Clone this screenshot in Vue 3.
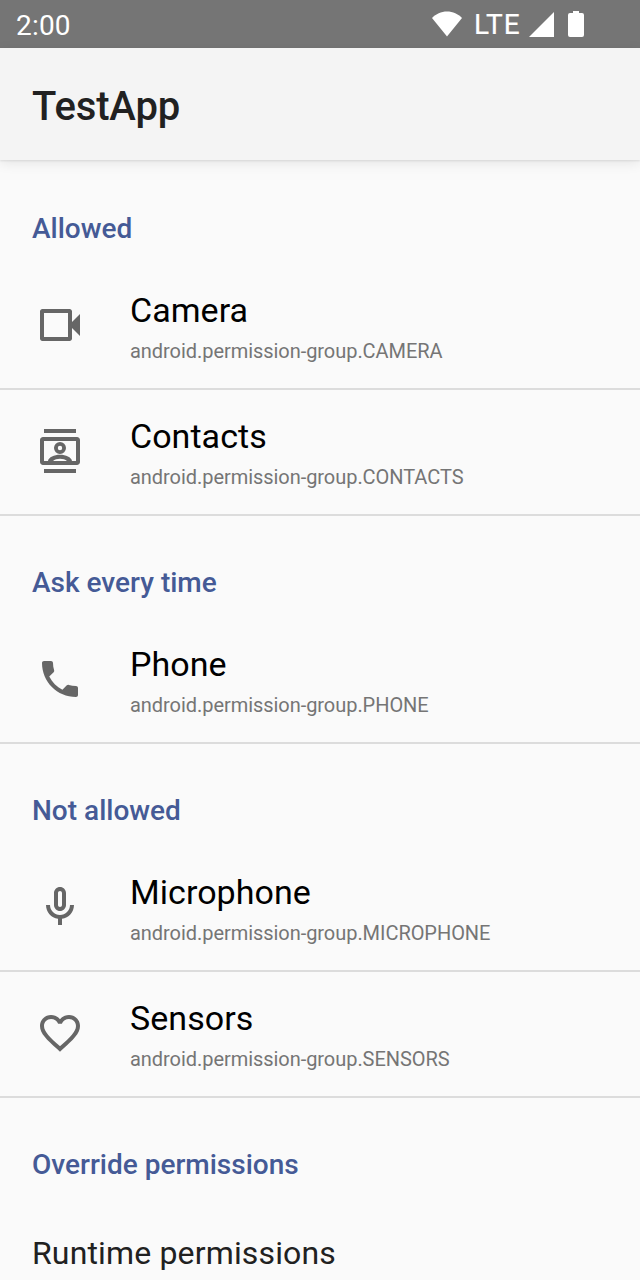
<script setup>
const sections = [
  { title: 'Allowed', items: [
    { name: 'Camera', id: 'CAMERA', icon: 'M3.200 4h13.600c.66 0 1.200.54 1.200 1.200v5.300l4-4v11l-4-4v5.300c0 .66-.54 1.200-1.200 1.200H3.200C2.540 20 2 19.460 2 18.800V5.200C2 4.540 2.540 4 3.200 4zM4 6v12h12V6z' },
    { name: 'Contacts', id: 'CONTACTS', icon: 'M4 1h16v2H4zM4 21h16v2H4zM3.500 5h17c.83 0 1.500.67 1.500 1.500v11c0 .83-.67 1.500-1.500 1.500h-17C2.670 19 2 18.330 2 17.500v-11C2 5.670 2.670 5 3.500 5zM4 7v10h2c.3-1.850 3.100-3.100 6-3.100s5.700 1.250 6 3.100h2V7zM8.500 17h7c-.8-.8-2.100-1.150-3.500-1.150s-2.700.35-3.500 1.150zM12 7.500a3 3 0 1 1 0 6a3 3 0 0 1 0-6zM12 9.400a1.100 1.100 0 1 0 0 2.200a1.100 1.100 0 0 0 0-2.200z' },
  ] },
  { title: 'Ask every time', items: [
    { name: 'Phone', id: 'PHONE', icon: 'M6.620 10.790c1.440 2.830 3.760 5.140 6.590 6.590l2.200-2.200c.27-.27.67-.36 1.020-.24 1.120.37 2.330.57 3.570.57.55 0 1 .45 1 1V20c0 .55-.45 1-1 1-9.390 0-17-7.610-17-17 0-.55.45-1 1-1h3.500c.55 0 1 .45 1 1 0 1.250.2 2.450.57 3.570.11.35.03.74-.25 1.020l-2.200 2.200z' },
  ] },
  { title: 'Not allowed', items: [
    { name: 'Microphone', id: 'MICROPHONE', icon: 'M12 14c1.660 0 3-1.340 3-3V5c0-1.660-1.340-3-3-3S9 3.340 9 5v6c0 1.660 1.340 3 3 3zm-1-9c0-.55.45-1 1-1s1 .45 1 1v6c0 .55-.45 1-1 1s-1-.45-1-1V5zM17 11c0 2.760-2.240 5-5 5s-5-2.240-5-5H5c0 3.530 2.610 6.430 6 6.920V21h2v-3.080c3.390-.49 6-3.390 6-6.920h-2z' },
    { name: 'Sensors', id: 'SENSORS', icon: 'M16.500 3c-1.740 0-3.410.81-4.500 2.090C10.910 3.810 9.240 3 7.500 3 4.420 3 2 5.420 2 8.500c0 3.780 3.400 6.860 8.550 11.540L12 21.350l1.450-1.320C18.600 15.360 22 12.280 22 8.500 22 5.420 19.580 3 16.500 3zm-4.400 15.550l-.1.100-.1-.1C7.140 14.240 4 11.390 4 8.500 4 6.500 5.500 5 7.500 5c1.540 0 3.040.99 3.570 2.360h1.870C13.460 5.990 14.960 5 16.500 5c2 0 3.500 1.500 3.500 3.500 0 2.890-3.140 5.740-7.900 10.050z' },
  ] },
]
</script>

<template>
  <main class="screen">
    <header class="status">
      <span class="clock">2:00</span>
      <svg class="wifi" viewBox="0 0 30 26"><path d="M15 25.500L0 7C4 3 9 .5 15 .5S26 3 30 7z" /></svg>
      <span class="lte">LTE</span>
      <svg class="signal" viewBox="0 0 26 26"><path d="M26 0v26H0z" /></svg>
      <svg class="battery" viewBox="0 0 16 26"><path d="M5 0h6v2h3a2 2 0 0 1 2 2v20a2 2 0 0 1-2 2H2a2 2 0 0 1-2-2V4a2 2 0 0 1 2-2h3z" /></svg>
    </header>
    <div class="toolbar"><h1>TestApp</h1></div>
    <div class="list">
      <section v-for="s in sections" :key="s.title">
        <h2>{{ s.title }}</h2>
        <div v-for="item in s.items" :key="item.id" class="row">
          <svg class="icon" viewBox="0 0 24 24"><path fill-rule="evenodd" :d="item.icon" /></svg>
          <div class="copy">
            <div class="name">{{ item.name }}</div>
            <div class="group">android.permission-group.{{ item.id }}</div>
          </div>
        </div>
      </section>
      <section>
        <h2>Override permissions</h2>
        <div class="runtime">Runtime permissions</div>
      </section>
    </div>
  </main>
</template>

<style>
html, body { margin: 0; overflow: hidden; }
</style>
<style scoped>
.screen { height: 1280px; overflow: hidden; background: #fafafa; font-family: Roboto, sans-serif; color: #000; }
.status { height: 48px; background: #757575; color: #fff; display: flex; align-items: flex-start; font-size: 28px; line-height: 50px; box-sizing: border-box; padding: 0 56px 0 16px; }
.status svg { fill: #fff; flex: none; }
.clock { flex: 1; line-height: 52px; letter-spacing: .2px; }
.wifi { width: 30px; height: 26px; margin: 11px 12px 0 0; }
.lte { width: 47px; margin-right: 8px; letter-spacing: .8px; -webkit-text-stroke: .2px #fff; }
.signal { width: 25px; height: 25px; margin: 12px 14px 0 0; }
.battery { width: 16px; height: 26px; margin-top: 11px; }
.toolbar { height: 112px; background: #f4f4f4; box-shadow: 0 1px 2px rgba(0,0,0,.09), 0 3px 12px rgba(0,0,0,.09); padding-left: 32px; }
h1 { margin: 0; font-size: 40px; line-height: 118px; font-weight: 500; letter-spacing: -.12px; color: #212121; }
.list { padding-top: 2px; }
h2 { margin: 0; height: 102px; box-sizing: border-box; padding: 49px 0 0 32px; font-size: 28px; line-height: 36px; font-weight: 500; color: #455a96; }
.row { height: 126px; box-sizing: border-box; border-bottom: 2px solid #dcdcdc; display: flex; padding: 0 36px; }
.icon { width: 48px; height: 48px; margin: 37px 46px 0 0; fill: #666; }
.copy { padding-top: 26px; }
.name { font-size: 34px; line-height: 40px; letter-spacing: .05px; }
.group { font-size: 20px; line-height: 24px; margin-top: 9px; letter-spacing: -.05px; color: #757575; }
.runtime { padding: 33px 32px; font-size: 32px; line-height: 40px; letter-spacing: .15px; color: #212121; }
</style>
